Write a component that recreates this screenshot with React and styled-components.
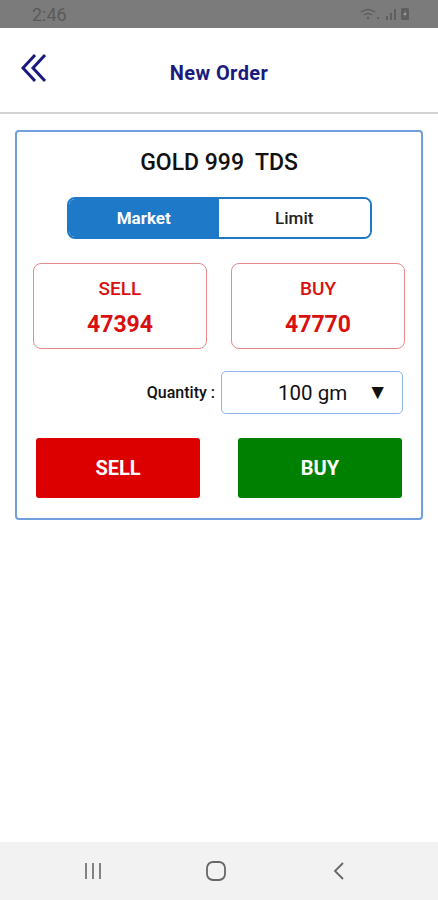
import styled, { createGlobalStyle } from "styled-components";

const Global = createGlobalStyle`
  html, body { margin: 0; padding: 0; background: #fff; }
  body { font-family: Roboto, "Noto Sans", Arial, sans-serif; }
`;

const Screen = styled.div`
  width: 438px;
  height: 900px;
  display: flex;
  flex-direction: column;
  background: #fff;
  overflow: hidden;
`;

const StatusBar = styled.div`
  height: 28px;
  background: #7b7b7b;
  display: flex;
  align-items: center;
  justify-content: space-between;
  padding: 0 28px 0 32px;
  color: #5a5a5a;
  font-size: 18px;
`;

const StatusIcons = styled.div`
  display: flex;
  align-items: center;
  gap: 3px;
`;

const Header = styled.div`
  height: 84px;
  border-bottom: 2px solid #d2d2d2;
  display: flex;
  align-items: center;
  padding-left: 20px;
`;

const BackBtn = styled.div`
  width: 28px;
  height: 32px;
  display: flex;
  align-items: center;
  margin-top: -2px;
`;

const Title = styled.div`
  flex: 1;
  text-align: center;
  font-size: 20px;
  letter-spacing: 0.4px;
  font-weight: 700;
  color: #1b1b7d;
  margin-right: 48px;
  padding-top: 6px;
`;

const Body = styled.div`
  flex: 1;
  padding: 16px 15px 0;
`;

const Card = styled.div`
  border: 2px solid #6f9fdc;
  border-radius: 4px;
  padding: 15px 16px 20px;
  display: flex;
  flex-direction: column;
  align-items: center;
`;

const Instrument = styled.div`
  font-size: 23px;
  font-weight: 500;
  color: #111;
  white-space: pre;
  line-height: 32px;
`;

const Segment = styled.div`
  margin-top: 18px;
  width: 305px;
  height: 42px;
  border: 2px solid #1e78c8;
  border-radius: 8px;
  display: flex;
  overflow: hidden;
  box-sizing: border-box;
`;

const SegBtn = styled.div`
  flex: 1;
  display: flex;
  align-items: center;
  justify-content: center;
  font-size: 17px;
  font-weight: ${(p) => (p.$active ? 700 : 500)};
  color: ${(p) => (p.$active ? "#fff" : "#222")};
  background: ${(p) => (p.$active ? "#1e7ac8" : "#fff")};
`;

const PriceRow = styled.div`
  margin-top: 24px;
  align-self: stretch;
  display: flex;
  justify-content: space-between;
`;

const PriceBox = styled.div`
  width: 174px;
  height: 86px;
  box-sizing: border-box;
  border: 1.5px solid #e98a8a;
  border-radius: 8px;
  display: flex;
  flex-direction: column;
  align-items: center;
  justify-content: center;
  padding-top: 2px;
  color: #d81010;
`;

const PriceLabel = styled.div`
  font-size: 19px;
  font-weight: 500;
  line-height: 22px;
`;

const PriceValue = styled.div`
  margin-top: 13px;
  font-size: 23px;
  font-weight: 700;
  line-height: 24px;
`;

const QtyRow = styled.div`
  margin-top: 22px;
  align-self: stretch;
  display: flex;
  align-items: center;
  justify-content: flex-end;
  padding-right: 2px;
`;

const QtyLabel = styled.div`
  font-size: 16px;
  font-weight: 500;
  color: #111;
  margin-right: 6px;
`;

const Select = styled.div`
  width: 182px;
  height: 43px;
  box-sizing: border-box;
  border: 1.5px solid #8fb3e0;
  border-radius: 5px;
  display: flex;
  align-items: center;
  justify-content: flex-end;
  padding-right: 14px;
  gap: 20px;
  font-size: 20.5px;
  color: #111;
`;

const Caret = styled.span`
  font-size: 21px;
  line-height: 1;
`;

const ActionRow = styled.div`
  margin-top: 24px;
  align-self: stretch;
  display: flex;
  justify-content: space-between;
  padding: 0 3px;
`;

const ActionBtn = styled.div`
  width: 164px;
  height: 60px;
  border-radius: 3px;
  background: ${(p) => p.$bg};
  color: #fff;
  font-size: 20px;
  font-weight: 700;
  display: flex;
  align-items: center;
  justify-content: center;
`;

const NavBar = styled.div`
  height: 58px;
  background: #f2f2f2;
  display: flex;
  align-items: center;
  justify-content: center;
  padding-right: 6px;
  color: #666;
`;

const NavItem = styled.div`
  width: 123px;
  display: flex;
  justify-content: center;
  align-items: center;
`;

export default function App() {
  return (
    <Screen>
      <Global />
      <StatusBar>
        <span>2:46</span>
        <StatusIcons>
          <svg width="22" height="12" viewBox="0 0 22 12">
            <path d="M1 4 Q8 -1 15 4" stroke="#5e5e5e" strokeWidth="1.5" fill="none" />
            <path d="M4 7 Q8 4 12 7" stroke="#5e5e5e" strokeWidth="1.5" fill="none" />
            <circle cx="8" cy="10" r="1.3" fill="#5e5e5e" />
            <rect x="17" y="9" width="2" height="2" fill="#5e5e5e" />
          </svg>
          <svg width="12" height="12" viewBox="0 0 12 12">
            <rect x="1" y="8" width="2" height="4" fill="#5e5e5e" />
            <rect x="5" y="5" width="2" height="7" fill="#5e5e5e" />
            <rect x="9" y="1" width="2" height="11" fill="#5e5e5e" />
          </svg>
          <svg width="10" height="14" viewBox="0 0 10 14">
            <rect x="1" y="1" width="8" height="12" rx="1.5" fill="#5e5e5e" />
            <path d="M6 3 L3 8 H5 L4 11 L7 6 H5 Z" fill="#9a9a9a" />
          </svg>
        </StatusIcons>
      </StatusBar>
      <Header>
        <BackBtn>
          <svg width="28" height="32" viewBox="0 0 28 32">
            <path d="M15 2 L3 15 L15 28" stroke="#1b1b7d" strokeWidth="3" fill="none" />
            <path d="M25 2 L13 15 L25 28" stroke="#1b1b7d" strokeWidth="3" fill="none" />
          </svg>
        </BackBtn>
        <Title>New Order</Title>
      </Header>
      <Body>
        <Card>
          <Instrument>GOLD 999  TDS</Instrument>
          <Segment>
            <SegBtn $active>Market</SegBtn>
            <SegBtn>Limit</SegBtn>
          </Segment>
          <PriceRow>
            <PriceBox>
              <PriceLabel>SELL</PriceLabel>
              <PriceValue>47394</PriceValue>
            </PriceBox>
            <PriceBox>
              <PriceLabel>BUY</PriceLabel>
              <PriceValue>47770</PriceValue>
            </PriceBox>
          </PriceRow>
          <QtyRow>
            <QtyLabel>Quantity :</QtyLabel>
            <Select>
              <span>100 gm</span>
              <Caret>▼</Caret>
            </Select>
          </QtyRow>
          <ActionRow>
            <ActionBtn $bg="#dd0000">SELL</ActionBtn>
            <ActionBtn $bg="#008000">BUY</ActionBtn>
          </ActionRow>
        </Card>
      </Body>
      <NavBar>
        <NavItem>
          <svg width="20" height="18" viewBox="0 0 20 18">
            <path d="M3 1 V17 M10 1 V17 M17 1 V17" stroke="#666" strokeWidth="1.6" />
          </svg>
        </NavItem>
        <NavItem>
          <svg width="22" height="22" viewBox="0 0 22 22">
            <rect x="2" y="2" width="18" height="18" rx="6" stroke="#666" strokeWidth="1.8" fill="none" />
          </svg>
        </NavItem>
        <NavItem>
          <svg width="14" height="20" viewBox="0 0 14 20">
            <path d="M11 2 L3 10 L11 18" stroke="#666" strokeWidth="1.8" fill="none" />
          </svg>
        </NavItem>
      </NavBar>
    </Screen>
  );
}
